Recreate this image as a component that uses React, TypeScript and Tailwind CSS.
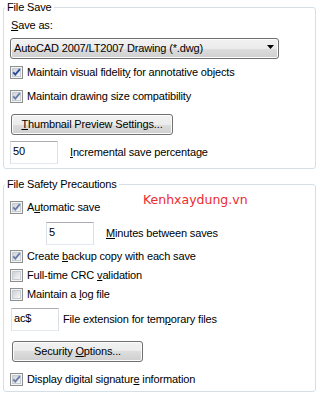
import React from 'react';

// Win7 style classic controls
const Check = ({ checked = false, dark = false }: { checked?: boolean; dark?: boolean }) => (
    <span className="relative flex h-[13px] w-[13px] shrink-0 items-center justify-center border border-[#8e8f8f] bg-[#f4f4f4]">
        <span className="h-[9px] w-[9px] border border-[#c6cbd2] bg-[linear-gradient(135deg,#cdd1d8,#f7f7f7)]" />
        {checked && (
            <svg className="absolute left-0 top-0" width="11" height="11" viewBox="0 0 11 11">
                <path d="M2.2 5.3 L4.3 7.6 L8.9 2.2" fill="none" stroke={dark ? '#2b4a9a' : '#6c7fa9'} strokeWidth="1.9" />
            </svg>
        )}
    </span>
);

const CheckRow = ({ checked, dark, children, className = '' }: { checked?: boolean; dark?: boolean; children: React.ReactNode; className?: string }) => (
    <div className={`flex h-[13px] items-center gap-[4px] ${className}`}>
        <Check checked={checked} dark={dark} />
        <span className="whitespace-nowrap">{children}</span>
    </div>
);

const Button = ({ children, className = '' }: { children: React.ReactNode; className?: string }) => (
    <div className={`flex h-[21px] items-center justify-center rounded-[3px] border border-[#707070] bg-[linear-gradient(#f2f2f2_0%,#ebebeb_50%,#dddddd_50%,#cfcfcf_100%)] shadow-[inset_0_0_0_1px_#fbfbfb] ${className}`}>
        {children}
    </div>
);

const TextBox = ({ value, className = '' }: { value: string; className?: string }) => (
    <div className={`h-[23px] w-[48px] shrink-0 border border-t-[#abadb3] border-x-[#dbdfe6] border-b-[#e3e9ef] bg-white pl-[2px] pt-[3px] ${className}`}>
        {value}
    </div>
);

const GroupBox = ({ title, children, className = '' }: { title: string; children: React.ReactNode; className?: string }) => (
    <fieldset className={`w-[313px] rounded-[3px] border border-[#d5dfe5] ${className}`}>
        <legend className="ml-[1px] px-[2px]">{title}</legend>
        <div className="px-[6px]">{children}</div>
    </fieldset>
);

const App: React.FC = () => {
    return (
        <div className="relative h-[395px] w-[321px] overflow-hidden bg-white px-[3px] pt-[1px] font-['Liberation_Sans',Arial,sans-serif] text-[11px] leading-[13px] tracking-[-0.15px] text-black">
            <GroupBox title="File Save" className="pb-[4px]">
                <div className="mt-[5px] ml-[1px]">
                    <u>S</u>ave as:
                </div>
                <div className="relative mt-[6px] flex h-[21px] w-[269px] items-center rounded-[3px] border border-[#707070] bg-[linear-gradient(#f2f2f2_0%,#ebebeb_50%,#dddddd_50%,#cfcfcf_100%)] pl-[3px] shadow-[inset_0_0_0_1px_#fbfbfb]">
                    AutoCAD 2007/LT2007 Drawing (*.dwg)
                    <svg className="absolute right-[4px] top-[6px]" width="7" height="4" viewBox="0 0 7 4">
                        <path d="M0 0 H7 L3.5 4 Z" fill="#000" />
                    </svg>
                </div>
                <CheckRow checked dark className="mt-[7px]">
                    Maintain visual fidelit<u>y</u> for annotative objects
                </CheckRow>
                <CheckRow checked className="mt-[11px]">
                    Maintain drawing size compatibility
                </CheckRow>
                <Button className="mt-[11px] ml-[1px] w-[162px]">
                    <span><u>T</u>humbnail Preview Settings...</span>
                </Button>
                <div className="mt-[6px] flex items-center">
                    <TextBox value="50" />
                    <span className="ml-[12px]"><u>I</u>ncremental save percentage</span>
                </div>
            </GroupBox>

            <GroupBox title="File Safety Precautions" className="mt-[9px] pb-[5px]">
                <CheckRow checked className="mt-[10px]">
                    A<u>u</u>tomatic save
                </CheckRow>
                <div className="mt-[8px] flex items-center">
                    <TextBox value="5" className="ml-[36px]" />
                    <span className="ml-[12px]"><u>M</u>inutes between saves</span>
                </div>
                <CheckRow checked className="mt-[5px]">
                    Create <u>b</u>ackup copy with each save
                </CheckRow>
                <CheckRow className="mt-[6px]">
                    Full-time CRC <u>v</u>alidation
                </CheckRow>
                <CheckRow className="mt-[6px]">
                    Maintain a <u>l</u>og file
                </CheckRow>
                <div className="mt-[7px] flex items-center">
                    <TextBox value="ac$" className="ml-[1px]" />
                    <span className="ml-[4px]">File extension for tem<u>p</u>orary files</span>
                </div>
                <Button className="mt-[10px] ml-[2px] w-[131px]">
                    <span>Security <u>O</u>ptions...</span>
                </Button>
                <CheckRow checked className="mt-[11px]">
                    Display digital signatur<u>e</u> information
                </CheckRow>
            </GroupBox>

            <div className="absolute left-[143px] top-[192px] font-['DejaVu_Sans',sans-serif] text-[12.5px] leading-[16px] tracking-normal text-[#ee2a2f]">
                Kenhxaydung.vn
            </div>
        </div>
    );
};

export default App;
